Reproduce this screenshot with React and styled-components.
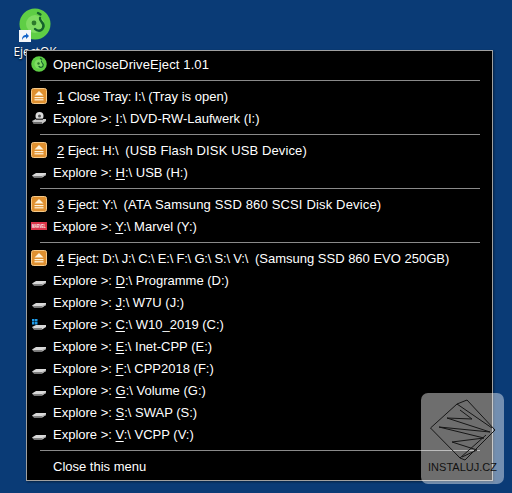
import React from 'react';
import styled, { createGlobalStyle } from 'styled-components';

const GlobalStyle = createGlobalStyle`
  html, body {
    margin: 0;
    padding: 0;
    background: #0a3b76;
  }
  body {
    font-family: 'Liberation Sans', 'Open Sans', sans-serif;
  }
`;

const Desktop = styled.div`
  position: relative;
  width: 512px;
  height: 493px;
  overflow: hidden;
  background: #0a3b76;
`;

const DesktopIcon = styled.div`
  position: absolute;
  left: 6px;
  top: 8px;
  width: 58px;
  display: flex;
  flex-direction: column;
  align-items: center;
`;

const IconImage = styled.div`
  position: relative;
  width: 32px;
  height: 32px;
`;

const ShortcutBadge = styled.div`
  position: absolute;
  left: 0;
  bottom: -2px;
  width: 12px;
  height: 12px;
  background: #f4f6f9;
  display: flex;
  align-items: center;
  justify-content: center;
`;

const IconLabel = styled.div`
  margin-top: 3px;
  font: 12px 'Open Sans', sans-serif;
  color: #fff;
  text-shadow: 0 1px 2px #000;
`;

const Menu = styled.div`
  position: absolute;
  left: 26px;
  top: 50px;
  width: 464px;
  height: 427px;
  padding: 2px 0 0 1px;
  background: #000;
  border: 1px solid #a0a0a0;
  box-shadow: 1px 1px 2px rgba(0, 0, 0, 0.45);
`;

const Row = styled.div`
  display: flex;
  align-items: center;
  height: 22px;
  color: #fff;
  font-size: 13px;
  white-space: pre;
`;

const IconSlot = styled.div`
  flex: none;
  width: 22px;
  display: flex;
  align-items: center;
  justify-content: center;
  margin-right: 3px;
`;

const Label = styled.span`
  padding-left: ${(p) => (p.$numbered ? '4px' : '0')};
  u {
    text-underline-offset: 2px;
  }
`;

const Title = styled(Label)`
  letter-spacing: 0.12px;
`;

const Prefix = styled.span`
  letter-spacing: -0.2px;
`;

const Detail = styled.span`
  letter-spacing: ${(p) => p.$spacing || 0}px;
`;

const Separator = styled.div`
  height: 1px;
  margin: 5px 12px 4px 12px;
  background: #8a8a8a;
`;

const CloseRow = styled(Row)`
  padding-left: 25px;
`;

const Watermark = styled.div`
  position: absolute;
  left: 421px;
  top: 393px;
  width: 83px;
  height: 91px;
  border-radius: 7px;
  background: rgba(255, 255, 255, 0.43);
  display: flex;
  flex-direction: column;
  align-items: center;
  padding-top: 6px;
  box-sizing: border-box;
`;

const WatermarkText = styled.div`
  font: 11px 'Liberation Sans', sans-serif;
  color: #111;
`;

const DiscLogo = ({ size }) => (
  <svg width={size} height={size} viewBox="0 0 32 32">
    <circle cx="16" cy="16" r="15.5" fill="#5fce45" />
    <circle cx="16" cy="16" r="9" fill="#7fdc62" />
    <circle cx="15" cy="15" r="2.4" fill="#2c7a2a" />
    <path d="M19 5 l2.5 1.5 M21 10 c-1 4 6 5 3 10 c-2 4 -6 3 -8 1" fill="none" stroke="#14622c" strokeWidth="2.4" strokeLinecap="round" />
  </svg>
);

const EjectIcon = () => (
  <svg width="16" height="16" viewBox="0 0 16 16">
    <rect x="0.5" y="0.5" width="15" height="15" rx="2" fill="#df9030" stroke="#f6c988" />
    <path d="M8 3 L12.5 7.5 H3.5 Z" fill="#fff3dc" />
    <rect x="3.5" y="9" width="9" height="1.2" fill="#fff3dc" />
    <rect x="3.5" y="11.2" width="9" height="1.2" fill="#fff3dc" />
  </svg>
);

const DriveIcon = () => (
  <svg width="16" height="16" viewBox="0 0 16 16">
    <path d="M1 11.5 L5 9 H15 L15 11 L11 13.5 H3 Z" fill="#d8d8d8" />
    <path d="M1 11.5 L3 13.5 H11 L11 12 H3 Z" fill="#808080" />
    <path d="M11 12 L15 10 V11 L11 13.5 Z" fill="#a8a8a8" />
  </svg>
);

const SystemDriveIcon = () => (
  <svg width="16" height="16" viewBox="0 0 16 16">
    <path d="M1 11 L5 9 H15 L15 11 L11 13.5 H3 Z" fill="#d8d8d8" />
    <path d="M1 11 L3 13.5 H11 L11 12 H3 Z" fill="#808080" />
    <rect x="1" y="3" width="2.5" height="2.5" fill="#1f9be8" />
    <rect x="4" y="3" width="2.5" height="2.5" fill="#1f9be8" />
    <rect x="1" y="6" width="2.5" height="2.5" fill="#1f9be8" />
    <rect x="4" y="6" width="2.5" height="2.5" fill="#1f9be8" />
  </svg>
);

const DvdIcon = () => (
  <svg width="16" height="16" viewBox="0 0 16 16">
    <path d="M1 11 L5 9 H15 V11 L11 14 H3 Z" fill="#c8c8c8" />
    <path d="M1 11 L3 14 H11 V12 H3 Z" fill="#6f6f6f" />
    <ellipse cx="8.5" cy="6" rx="4" ry="4" fill="#dcdcdc" />
    <circle cx="8.5" cy="6" r="1.5" fill="#555" />
    <rect x="5" y="8.5" width="7" height="1.5" fill="#444" />
  </svg>
);

const MarvelIcon = () => (
  <svg width="16" height="8" viewBox="0 0 16 8">
    <rect width="16" height="8" fill="#d9344a" />
    <text transform="translate(1 6.2) scale(1 1.5)" fontFamily="Liberation Sans" fontWeight="700" fontSize="3.3" fill="#fbeef0">
      MARVEL
    </text>
  </svg>
);

const ICONS = {
  eject: EjectIcon,
  drive: DriveIcon,
  system: SystemDriveIcon,
  dvd: DvdIcon,
  marvel: MarvelIcon,
};

const sections = [
  [
    { icon: 'eject', num: '1', prefix: ' Close Tray: I:\\ ', detail: '(Tray is open)' },
    { icon: 'dvd', letter: 'I', text: ':\\ DVD-RW-Laufwerk (I:)' },
  ],
  [
    { icon: 'eject', num: '2', prefix: ' Eject: H:\\  ', detail: '(USB Flash DISK USB Device)', spacing: 0.12 },
    { icon: 'drive', letter: 'H', text: ':\\ USB (H:)' },
  ],
  [
    { icon: 'eject', num: '3', prefix: ' Eject: Y:\\  ', detail: '(ATA Samsung SSD 860 SCSI Disk Device)', spacing: 0.16 },
    { icon: 'marvel', letter: 'Y', text: ':\\ Marvel (Y:)' },
  ],
  [
    { icon: 'eject', num: '4', prefix: ' Eject: D:\\ J:\\ C:\\ E:\\ F:\\ G:\\ S:\\ V:\\  ', detail: '(Samsung SSD 860 EVO 250GB)' },
    { icon: 'drive', letter: 'D', text: ':\\ Programme (D:)' },
    { icon: 'drive', letter: 'J', text: ':\\ W7U (J:)' },
    { icon: 'system', letter: 'C', text: ':\\ W10_2019 (C:)' },
    { icon: 'drive', letter: 'E', text: ':\\ Inet-CPP (E:)' },
    { icon: 'drive', letter: 'F', text: ':\\ CPP2018 (F:)' },
    { icon: 'drive', letter: 'G', text: ':\\ Volume (G:)' },
    { icon: 'drive', letter: 'S', text: ':\\ SWAP (S:)' },
    { icon: 'drive', letter: 'V', text: ':\\ VCPP (V:)' },
  ],
];

function MenuRow({ item }) {
  const Icon = ICONS[item.icon];
  return (
    <Row>
      <IconSlot>
        <Icon />
      </IconSlot>
      {item.num ? (
        <Label $numbered>
          <u>{item.num}</u>
          <Prefix>{item.prefix}</Prefix>
          <Detail $spacing={item.spacing}>{item.detail}</Detail>
        </Label>
      ) : (
        <Label>
          Explore &gt;: <u>{item.letter}</u>
          {item.text}
        </Label>
      )}
    </Row>
  );
}

function App() {
  return (
    <Desktop>
      <GlobalStyle />
      <DesktopIcon>
        <IconImage>
          <DiscLogo size={32} />
          <ShortcutBadge>
            <svg width="10" height="10" viewBox="0 0 10 10">
              <path d="M2 9 C2 5 4 4 6 4 V2 L9 5 L6 8 V6 C4 6 3 7 2 9 Z" fill="#1464c8" />
            </svg>
          </ShortcutBadge>
        </IconImage>
        <IconLabel>EjectOK</IconLabel>
      </DesktopIcon>

      <Menu>
        <Row>
          <IconSlot>
            <DiscLogo size={16} />
          </IconSlot>
          <Title>OpenCloseDriveEject 1.01</Title>
        </Row>
        {sections.map((section, i) => (
          <React.Fragment key={i}>
            <Separator />
            {section.map((item, j) => (
              <MenuRow key={j} item={item} />
            ))}
          </React.Fragment>
        ))}
        <Separator />
        <CloseRow>Close this menu</CloseRow>
      </Menu>

      <Watermark>
        <svg width="66" height="62" viewBox="0 0 66 62" fill="none" stroke="#161616" strokeWidth="1">
          <path d="M0.5 29 L27 5 L37 1 L65 31 L35 61 L30 59 Z" />
          <path d="M27 5 L62 29 M30 59 L56 36" />
          <path d="M30 11 L42 20 L17 19 L60 33 L9 28 L54 39 L22 43 L47 51 L32 58" />
        </svg>
        <WatermarkText>INSTALUJ.CZ</WatermarkText>
      </Watermark>
    </Desktop>
  );
}

export default App;
